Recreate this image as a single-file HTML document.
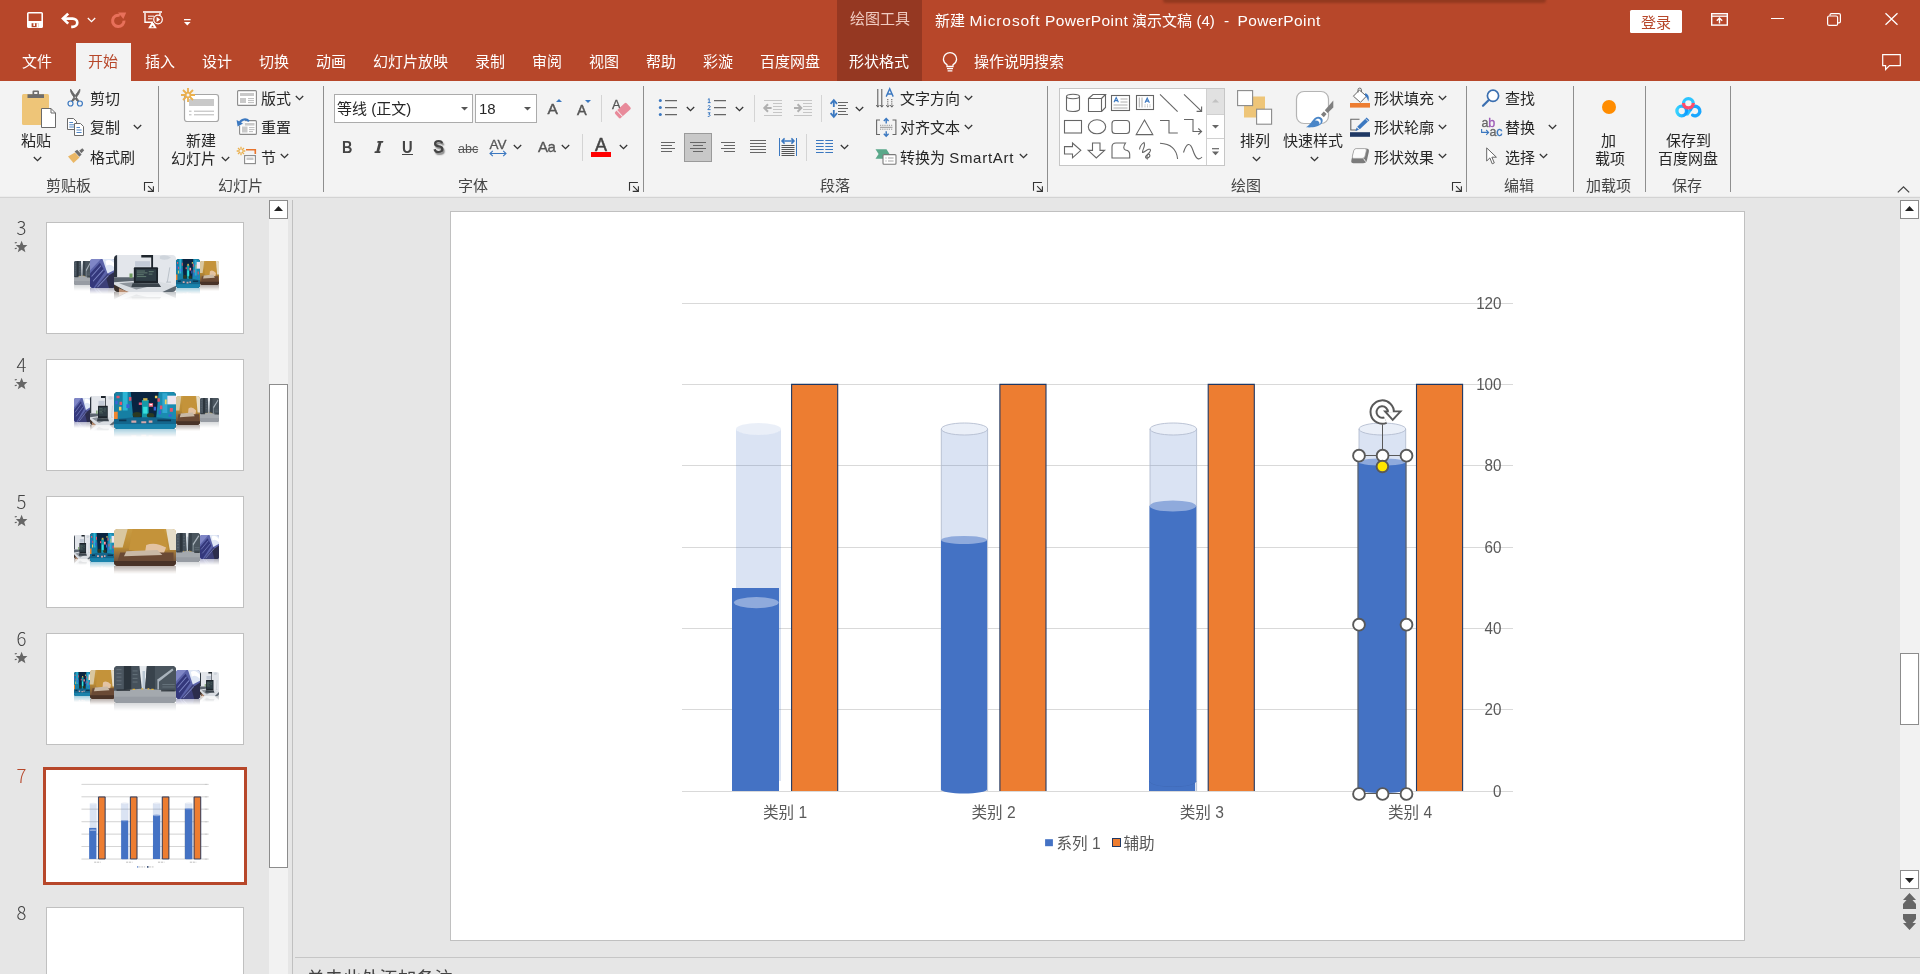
<!DOCTYPE html>
<html lang="zh-CN">
<head>
<meta charset="utf-8">
<title>PowerPoint</title>
<style>
*{box-sizing:border-box;margin:0;padding:0}
html,body{width:1920px;height:974px;overflow:hidden;background:#e6e6e6}
body{position:relative;-webkit-font-smoothing:antialiased;font-family:"Liberation Sans","Noto Sans CJK SC",sans-serif;font-size:15px;color:#262626}
#wrap{position:absolute;left:0;top:0;width:1920px;height:974px;will-change:transform}
.abs,.t,.ic,.sep,.ssep,.lbl,.dd{position:absolute}
.t{white-space:nowrap;line-height:20px;height:20px;margin-top:1px}
#titlebar{position:absolute;left:0;top:0;width:1920px;height:81px;background:#b7472a}
#titlebar .t{color:#fff}
#ribbon{position:absolute;left:0;top:81px;width:1920px;height:116px;background:#f3f3f3}
#ribbonline{position:absolute;left:0;top:196px;width:1920px;height:2px;background:linear-gradient(#ececec 0,#ececec 50%,#d3d3d3 50%,#d3d3d3 100%)}
.sep{width:1px;background:#8e8e8e;top:86px;height:106px}
.ssep{width:1px;background:#d4d4d4}
.lbl{color:#444;top:175px}
svg{position:absolute;overflow:visible}
.dd{width:9px;height:6px}
</style>
</head>
<body>
<div id="wrap">
<svg width="0" height="0" style="position:absolute">
<defs>
<symbol id="chev" viewBox="0 0 9 6" overflow="visible"><path d="M0.8 1 L4.5 4.6 L8.2 1" fill="none" stroke="currentColor" stroke-width="1.3"/></symbol>
<symbol id="launch" viewBox="0 0 10 10" overflow="visible"><path d="M0.5 8.700 V0.500 H8.900 M4.200 4.200 L9.300 9.300 M9.400 4.200 V9.400 H3.700" fill="none" stroke="#333" stroke-width="1.100"/></symbol>
</defs>
</svg>
<div id="titlebar">
 <div class="abs" style="left:1163px;top:-2px;width:383px;height:5px;background:#93391f;border-radius:0 0 3px 3px;filter:blur(1.3px)"></div>
 <div class="abs" style="left:837px;top:0;width:85px;height:81px;background:#953822"></div>
 <div class="abs" style="left:76px;top:43px;width:55px;height:38px;background:#f3f3f3"></div>
 <!-- quick access -->
 <svg style="left:27px;top:12px" width="16" height="16" viewBox="0 0 16 16"><rect x="0.8" y="0.8" width="14.4" height="14.4" rx="0.8" fill="none" stroke="#fff" stroke-width="1.6"/><rect x="1" y="9" width="14" height="6.4" fill="#fff"/><rect x="4.6" y="11.2" width="6.8" height="4" fill="#b7472a"/><rect x="6.4" y="11.2" width="1.6" height="2.8" fill="#fff"/><rect x="9.6" y="11.2" width="1.8" height="4" fill="#fff"/></svg>
 <svg style="left:61px;top:13px" width="18" height="15" viewBox="0 0 18 15"><path d="M2 5.6 H11.6 a4.7 4.1 0 0 1 0 8.2 H10.2" fill="none" stroke="#fff" stroke-width="2.7"/><path d="M7.2 0.6 L2 5.6 L7.2 10.6" fill="none" stroke="#fff" stroke-width="2.7"/></svg>
 <svg class="dd" style="left:87px;top:17px;color:#fff" viewBox="0 0 9 6"><use href="#chev"/></svg>
 <svg style="left:110px;top:12px" width="17" height="16" viewBox="0 0 17 16"><path d="M9.8 3.4 A5.7 5.7 0 1 0 14 8.6" fill="none" stroke="#e8705a" stroke-width="3"/><path d="M8 0.4 H16.2 L13.4 7 Z" fill="#e8705a"/></svg>
 <svg style="left:143px;top:11px" width="20" height="18" viewBox="0 0 20 18"><path d="M0 1 H19" stroke="#fff" stroke-width="1.6"/><path d="M2 2 V11.2 H10" fill="none" stroke="#fff" stroke-width="1.4"/><path d="M17 2 V4" stroke="#fff" stroke-width="1.4"/><path d="M5 5.2 H11 M5 7.8 H9.5" stroke="#fff" stroke-width="1"/><circle cx="15" cy="8.5" r="4.3" fill="none" stroke="#fff" stroke-width="1.2"/><path d="M13.6 6 L17.2 8.5 L13.6 11 Z" fill="#fff"/><path d="M8.3 12 L5.2 17.3 H13.8 L10.7 12 Z M9.5 14.5 L8 16.2 H11 Z" fill="#fff" fill-rule="evenodd"/></svg>
 <svg style="left:184px;top:19px" width="7" height="7" viewBox="0 0 7 7"><rect x="0" y="0" width="6.6" height="1.3" fill="#fff"/><path d="M0 3 H6.6 L3.3 6.4 Z" fill="#fff"/></svg>
 <!-- title -->
 <div class="t" style="left:850px;top:8px;color:#f0cbc1;font-size:15px">绘图工具</div>
 <div class="t" style="left:935px;top:10px;font-size:15px">新建</div>
 <div class="t" style="left:969.5px;top:10px;font-size:15.5px;letter-spacing:.9px">Microsoft</div>
 <div class="t" style="left:1045px;top:10px;font-size:15.5px;letter-spacing:.38px">PowerPoint</div>
 <div class="t" style="left:1132px;top:10px;font-size:15px">演示文稿</div>
 <div class="t" style="left:1196.5px;top:10px;font-size:15px">(4)</div>
 <div class="t" style="left:1224px;top:10px;font-size:15.5px">-</div>
 <div class="t" style="left:1237.5px;top:10px;font-size:15.5px;letter-spacing:.38px">PowerPoint</div>
 <div class="abs" style="left:1630px;top:10px;width:52px;height:23px;background:#fff;border-radius:1.5px"></div>
 <div class="t" style="left:1641px;top:12px;color:#b7472a !important;font-size:15px"><span style="color:#b7472a">登录</span></div>
 <svg style="left:1711px;top:13px" width="17" height="13" viewBox="0 0 17 13"><rect x="0.700" y="0.700" width="15.600" height="11.400" fill="none" stroke="#fff" stroke-width="1.400"/><path d="M0.700 3.200 H16.300" stroke="#fff" stroke-width="1.300"/><path d="M8.500 10.600 V5.200 M5.800 7.800 L8.500 5.100 L11.200 7.800" fill="none" stroke="#fff" stroke-width="1.400"/></svg>
 <div class="abs" style="left:1771px;top:17.600px;width:13px;height:1.400px;background:#fff"></div>
 <svg style="left:1827px;top:13px" width="14" height="13" viewBox="0 0 14 13"><rect x="0.6" y="3" width="10" height="9.4" rx="1.5" fill="none" stroke="#fff" stroke-width="1.2"/><path d="M3 2.8 V2 a1.4 1.4 0 0 1 1.4 -1.4 H12 a1.4 1.4 0 0 1 1.4 1.4 V8.5 a1.4 1.4 0 0 1 -1.4 1.4 H11" fill="none" stroke="#fff" stroke-width="1.2"/></svg>
 <svg style="left:1885px;top:13px" width="13" height="12" viewBox="0 0 13 12"><path d="M0.5 0.3 L12.5 11.7 M12.5 0.3 L0.5 11.7" stroke="#fff" stroke-width="1.3"/></svg>
 <!-- tabs -->
 <div class="t" style="left:22px;top:51px">文件</div>
 <div class="t" style="left:88px;top:51px"><span style="color:#b7472a">开始</span></div>
 <div class="t" style="left:145px;top:51px">插入</div>
 <div class="t" style="left:202px;top:51px">设计</div>
 <div class="t" style="left:259px;top:51px">切换</div>
 <div class="t" style="left:316px;top:51px">动画</div>
 <div class="t" style="left:373px;top:51px">幻灯片放映</div>
 <div class="t" style="left:475px;top:51px">录制</div>
 <div class="t" style="left:532px;top:51px">审阅</div>
 <div class="t" style="left:589px;top:51px">视图</div>
 <div class="t" style="left:646px;top:51px">帮助</div>
 <div class="t" style="left:703px;top:51px">彩漩</div>
 <div class="t" style="left:760px;top:51px">百度网盘</div>
 <div class="t" style="left:849px;top:51px">形状格式</div>
 <svg style="left:942px;top:52px" width="16" height="21" viewBox="0 0 16 21"><path d="M5 14.5 V12.8 C3 11.3 1.4 9.6 1.4 7.2 a6.6 6.6 0 0 1 13.2 0 C14.6 9.6 13 11.3 11 12.8 V14.5 Z" fill="none" stroke="#fff" stroke-width="1.3"/><path d="M5 16.6 H11 M5.6 18.8 H10.4" stroke="#fff" stroke-width="1.3"/></svg>
 <div class="t" style="left:974px;top:51px">操作说明搜索</div>
 <svg style="left:1882px;top:54px" width="19" height="17" viewBox="0 0 19 17"><path d="M0.7 0.7 H18.3 V11.6 H7.5 L3.6 15.5 V11.6 H0.7 Z" fill="none" stroke="#fff" stroke-width="1.2"/></svg>
</div>

<div id="ribbon"></div>
<div id="ribbonline"></div>
<div id="rb">
<!-- separators -->
<div class="sep" style="left:158px"></div>
<div class="sep" style="left:323px"></div>
<div class="sep" style="left:643px"></div>
<div class="sep" style="left:1047px"></div>
<div class="sep" style="left:1466px"></div>
<div class="sep" style="left:1573px"></div>
<div class="sep" style="left:1645px"></div>
<div class="sep" style="left:1730px"></div>
<!-- group labels -->
<div class="t lbl" style="left:46px">剪贴板</div>
<div class="t lbl" style="left:218px">幻灯片</div>
<div class="t lbl" style="left:458px">字体</div>
<div class="t lbl" style="left:820px">段落</div>
<div class="t lbl" style="left:1231px">绘图</div>
<div class="t lbl" style="left:1504px">编辑</div>
<div class="t lbl" style="left:1586px">加载项</div>
<div class="t lbl" style="left:1672px">保存</div>
<svg style="left:144px;top:182px" width="10" height="10"><use href="#launch"/></svg>
<svg style="left:629px;top:182px" width="10" height="10"><use href="#launch"/></svg>
<svg style="left:1033px;top:182px" width="10" height="10"><use href="#launch"/></svg>
<svg style="left:1452px;top:182px" width="10" height="10"><use href="#launch"/></svg>
<svg style="left:1897px;top:186px" width="13" height="7" viewBox="0 0 13 7"><path d="M0.8 6.4 L6.5 0.9 L12.2 6.4" fill="none" stroke="#444" stroke-width="1.3"/></svg>
<!--CLIP-->
<!-- clipboard group -->
<svg style="left:22px;top:90px" width="34" height="38" viewBox="0 0 34 38">
 <rect x="0" y="4" width="27" height="31" rx="1.5" fill="#eec578"/>
 <path d="M5.5 8 V4.2 H10.5 V1.6 a1.2 1.2 0 0 1 1.2 -1.2 H15.8 a1.2 1.2 0 0 1 1.2 1.2 V4.2 H22 V8 Z" fill="#6d6d6d"/>
 <rect x="12.2" y="2" width="3.2" height="2" fill="#f3f3f3"/>
 <path d="M19.5 18.5 H29 L33.5 23 V37.5 H19.5 Z" fill="#fff" stroke="#6a6a6a" stroke-width="1"/>
 <path d="M29 18.5 V23 H33.5" fill="none" stroke="#6a6a6a" stroke-width="1"/>
</svg>
<div class="t" style="left:21px;top:130px">粘贴</div>
<svg class="dd" style="left:33px;top:156px;color:#333" viewBox="0 0 9 6"><use href="#chev"/></svg>
<svg style="left:67px;top:89px" width="17" height="18" viewBox="0 0 17 18">
 <path d="M3.6 0.2 C3.2 3 4.6 5.6 10.6 12.6 L11.8 11.8 C9.6 8.4 6.4 4.4 3.6 0.2 Z M12.8 0.2 C13.2 3 11.8 5.6 5.8 12.6 L4.6 11.8 C6.8 8.4 10 4.4 12.8 0.2 Z" fill="#666" stroke="#666" stroke-width="0.9"/>
 <circle cx="3.5" cy="14.5" r="2.5" fill="none" stroke="#3b78c0" stroke-width="1.2"/>
 <circle cx="12.9" cy="14.5" r="2.5" fill="none" stroke="#3b78c0" stroke-width="1.2"/>
</svg>
<div class="t" style="left:90px;top:88px">剪切</div>
<svg style="left:67px;top:118px" width="18" height="18" viewBox="0 0 18 18">
 <path d="M0.5 0.5 H6.5 L9.5 3.5 V11.5 H0.5 Z" fill="#fff" stroke="#6a6a6a"/>
 <path d="M2.3 4.5 H6 M2.3 6.8 H7.5 M2.3 9 H7.5" stroke="#3b78c0" stroke-width="0.9"/>
 <path d="M7.5 5.5 H13.5 L16.5 8.5 V17.5 H7.5 Z" fill="#fff" stroke="#6a6a6a"/>
 <path d="M9.5 9.5 H13 M9.5 12 H14.6 M9.5 14.5 H14.6" stroke="#3b78c0" stroke-width="0.9"/>
</svg>
<div class="t" style="left:90px;top:117px">复制</div>
<svg class="dd" style="left:133px;top:124px;color:#333" viewBox="0 0 9 6"><use href="#chev"/></svg>
<svg style="left:67px;top:148px" width="18" height="16" viewBox="0 0 18 16">
 <path d="M1 8.5 L8 4.5 L12.5 9.5 L6.5 15 Z" fill="#eab766"/>
 <path d="M7.6 3.6 L10.2 1.8 L14.6 6.6 L12.4 8.8 Z" fill="#6d6d6d"/>
 <path d="M12.2 2.8 L15.3 0.2 L17.2 2.2 L14.4 5.2 Z" fill="#6d6d6d"/>
</svg>
<div class="t" style="left:90px;top:147px">格式刷</div>

<!--SLIDES-->
<!-- slides group -->
<svg style="left:181px;top:88px" width="39" height="35" viewBox="0 0 39 35">
 <rect x="3.5" y="6.5" width="34" height="27" rx="2.5" fill="#fff" stroke="#a6a6a6" stroke-width="1.2"/>
 <rect x="8" y="11" width="25" height="7" fill="#c9c9c9"/>
 <path d="M8 23.2 H10.5 M13 23.2 H33 M8 26.8 H10.5 M13 26.8 H33" stroke="#b5b5b5" stroke-width="1"/>
 <g stroke="#eab04e" stroke-width="1.800" fill="none"><path d="M7 0 V4.3 M7 9.7 V14 M0 7 H4.3 M9.7 7 H14 M2 2 L5 5 M9 9 L12 12 M12 2 L9 5 M5 9 L2 12"/><circle cx="7" cy="7" r="2.4" fill="#f3f3f3"/></g>
</svg>
<div class="t" style="left:186px;top:130px">新建</div>
<div class="t" style="left:171px;top:148px">幻灯片</div>
<svg class="dd" style="left:220.5px;top:156px;color:#333" viewBox="0 0 9 6"><use href="#chev"/></svg>
<svg style="left:237px;top:90px" width="20" height="16" viewBox="0 0 20 16">
 <rect x="0.6" y="0.6" width="18.8" height="14.8" rx="1" fill="#fff" stroke="#8a8a8a" stroke-width="1.1"/>
 <rect x="3" y="3" width="14" height="3" fill="#c9c9c9"/><rect x="3" y="8" width="6" height="5" fill="#c9c9c9"/>
 <path d="M11 8.6 H17 M11 10.6 H17 M11 12.6 H17" stroke="#b5b5b5" stroke-width="0.9"/>
</svg>
<div class="t" style="left:261px;top:88px">版式</div>
<svg class="dd" style="left:295px;top:95px;color:#333" viewBox="0 0 9 6"><use href="#chev"/></svg>
<svg style="left:237px;top:117px" width="20" height="18" viewBox="0 0 20 18">
 <rect x="2.600" y="3.600" width="16.800" height="13.800" rx="1" fill="#fff" stroke="#8a8a8a" stroke-width="1.100"/>
 <rect x="8" y="6" width="9.500" height="2.600" fill="#c9c9c9"/><rect x="5" y="9.500" width="5.500" height="6" fill="#c9c9c9"/>
 <path d="M12 10.600 H17.500 M12 12.600 H17.500 M12 14.600 H16" stroke="#b5b5b5" stroke-width="0.900"/>
 <path d="M-1 0 H8 V8.600 H-1 Z" fill="#f3f3f3"/>
 <path d="M2.400 7 C3 2.800 8.500 0.800 12 4.200" fill="none" stroke="#3b78c0" stroke-width="2.200"/>
 <path d="M-0.400 3 L6 6.400 L0.600 9.600 Z" fill="#3b78c0"/>
</svg>
<div class="t" style="left:261px;top:117px">重置</div>
<svg style="left:237px;top:147px" width="20" height="18" viewBox="0 0 20 18">
 <g stroke="#eab04e" stroke-width="1.3" fill="none"><path d="M4 -0.3 V2.6 M4 5.4 V8.3 M-0.3 4 H2.6 M5.4 4 H8.3 M1 1 L3 3 M5 5 L7 7 M7 1 L5 3 M3 5 L1 7"/></g>
 <path d="M9 2.800 H18.300 V7" fill="none" stroke="#e8742c" stroke-width="1.600"/>
 <rect x="7.6" y="8.6" width="10.8" height="8" fill="#fff" stroke="#8a8a8a" stroke-width="1.1"/>
 <rect x="9.5" y="10.5" width="7" height="2.5" fill="#c9c9c9"/>
</svg>
<div class="t" style="left:261px;top:147px">节</div>
<svg class="dd" style="left:280px;top:153px;color:#333" viewBox="0 0 9 6"><use href="#chev"/></svg>

<!-- font group -->
<div class="abs" style="left:334px;top:94px;width:139px;height:29px;background:#fff;border:1px solid #ababab"></div>
<div class="abs" style="left:475px;top:94px;width:62px;height:29px;background:#fff;border:1px solid #ababab"></div>
<div class="t" style="left:337px;top:98px">等线 (正文)</div>
<div class="t" style="left:479px;top:98px">18</div>
<svg style="left:461px;top:107px" width="7" height="4" viewBox="0 0 7 4"><path d="M0 0 H7 L3.5 3.6 Z" fill="#555"/></svg>
<svg style="left:524px;top:107px" width="7" height="4" viewBox="0 0 7 4"><path d="M0 0 H7 L3.5 3.6 Z" fill="#555"/></svg>
<div class="t" style="left:547.5px;top:98px;font-size:15.5px;color:#555;-webkit-text-stroke:.45px #555">A</div>
<svg style="left:556px;top:99px" width="6" height="3" viewBox="0 0 6 3"><path d="M0 3 H6 L3 0 Z" fill="#3b78c0"/></svg>
<div class="t" style="left:577px;top:99px;font-size:14.5px;color:#555;-webkit-text-stroke:.45px #555">A</div>
<svg style="left:585px;top:100px" width="6" height="3" viewBox="0 0 6 3"><path d="M0 0 H6 L3 3 Z" fill="#3b78c0"/></svg>
<div class="ssep" style="left:601px;top:95px;height:27px"></div>
<div class="t" style="left:612px;top:94px;font-size:13px;color:#555;-webkit-text-stroke:.3px #555">A</div>
<svg style="left:614px;top:102px" width="17" height="17" viewBox="0 0 17 17"><g transform="rotate(-42 8.8 8.6)"><rect x="1" y="4.4" width="15.6" height="8.4" rx="1.6" fill="#e88a9a"/><path d="M4.6 4.4 V12.8" stroke="#f3f3f3" stroke-width="1"/></g></svg>
<div class="t" style="left:342px;top:137px;font-size:16.7px;font-weight:bold;color:#444;transform:scaleX(.86);transform-origin:left">B</div>
<svg style="left:374px;top:141px" width="10" height="12" viewBox="0 0 10 12"><path d="M3.6 0 H9.4 L9 1.7 H7.4 L5.2 10.3 H6.6 L6.2 12 H0.4 L0.8 10.3 H2.4 L4.6 1.7 H3.2 Z" fill="#444"/></svg>
<div class="t" style="left:402px;top:137px;font-size:16.7px;color:#444;font-weight:bold;transform:scaleX(.88);transform-origin:left">U</div>
<div class="abs" style="left:402px;top:154px;width:11px;height:1.3px;background:#444"></div>
<div class="t" style="left:433px;top:136px;font-size:18.5px;font-weight:bold;transform:scaleX(.9);transform-origin:left;color:#444;text-shadow:1.5px 1.5px 1.5px rgba(0,0,0,.45)">S</div>
<div class="t" style="left:458px;top:138px;font-size:12.5px;color:#555;text-decoration:line-through">abc</div>
<div class="t" style="left:489.5px;top:134px;font-size:13.5px;color:#555;letter-spacing:0px;-webkit-text-stroke:.3px #555">AV</div>
<svg style="left:489px;top:150px" width="18" height="7" viewBox="0 0 18 7"><path d="M1 3.5 H17 M3.8 0.8 L1 3.5 L3.8 6.2 M14.2 0.8 L17 3.5 L14.2 6.2" fill="none" stroke="#3b78c0" stroke-width="1.1"/></svg>
<svg class="dd" style="left:513px;top:144px;color:#333" viewBox="0 0 9 6"><use href="#chev"/></svg>
<div class="t" style="left:538px;top:136px;font-size:15px;color:#555;letter-spacing:-.6px;-webkit-text-stroke:.35px #555">Aa</div>
<svg class="dd" style="left:561px;top:144px;color:#333" viewBox="0 0 9 6"><use href="#chev"/></svg>
<div class="ssep" style="left:582px;top:134px;height:27px"></div>
<div class="t" style="left:595px;top:134px;font-size:18px;color:#444;-webkit-text-stroke:.5px #444">A</div>
<div class="abs" style="left:591px;top:152px;width:20px;height:5px;background:#f00"></div>
<svg class="dd" style="left:619px;top:144px;color:#333" viewBox="0 0 9 6"><use href="#chev"/></svg>

<!-- paragraph group -->
<svg style="left:658px;top:98px" width="20" height="19" viewBox="0 0 20 19">
 <g fill="#3b78c0"><circle cx="2.3" cy="2.6" r="1.5"/><circle cx="2.3" cy="9.6" r="1.5"/><circle cx="2.3" cy="16.6" r="1.5"/></g>
 <path d="M7 2.6 H19 M7 9.6 H19 M7 16.6 H19" stroke="#666" stroke-width="1.1"/>
</svg>
<svg class="dd" style="left:686px;top:106px;color:#333" viewBox="0 0 9 6"><use href="#chev"/></svg>
<svg style="left:707px;top:98px" width="20" height="19" viewBox="0 0 20 19">
 <path d="M7 2.6 H19 M7 9.6 H19 M7 16.6 H19" stroke="#666" stroke-width="1.1"/>
 <g fill="none" stroke="#3b78c0" stroke-width="1"><path d="M0.8 1.6 L2.2 0.6 V4.6 M0.8 4.6 H3.6"/><path d="M0.8 8.2 C1.6 7.2 3.4 7.4 3.2 8.8 C3 9.8 1.2 10.4 0.8 11.6 H3.6"/><path d="M0.8 14.8 H3.2 L1.8 16.3 C3.6 16.3 3.8 18.6 0.8 18.5"/></g>
</svg>
<svg class="dd" style="left:735px;top:106px;color:#333" viewBox="0 0 9 6"><use href="#chev"/></svg>
<div class="ssep" style="left:754px;top:95px;height:27px"></div>
<svg style="left:763px;top:100px" width="19" height="16" viewBox="0 0 19 16">
 <path d="M1 0.5 H19 M10 3.5 H19 M10 6.5 H19 M10 9.500 H19 M10 12.5 H19 M1 15.5 H19" stroke="#c6c6c6" stroke-width="1"/>
 <path d="M8.6 8 H2.4" stroke="#b0b0b0" stroke-width="2"/><path d="M5 4.300 L1.300 8 L5 11.700" fill="none" stroke="#b0b0b0" stroke-width="2"/>
</svg>
<svg style="left:793px;top:100px" width="19" height="16" viewBox="0 0 19 16">
 <path d="M1 0.5 H19 M10 3.5 H19 M10 6.5 H19 M10 9.500 H19 M10 12.5 H19 M1 15.5 H19" stroke="#c6c6c6" stroke-width="1"/>
 <path d="M1 8 H7.200" stroke="#b0b0b0" stroke-width="2"/><path d="M4.600 4.300 L8.300 8 L4.600 11.700" fill="none" stroke="#b0b0b0" stroke-width="2"/>
</svg>
<div class="ssep" style="left:821px;top:95px;height:27px"></div>
<svg style="left:830px;top:99px" width="19" height="19" viewBox="0 0 19 19">
 <path d="M3.800 2 V8 M3.800 11 V17" stroke="#3b78c0" stroke-width="1.800"/><path d="M0.600 4.800 L3.800 1.200 L7 4.800 M0.600 14.200 L3.800 17.800 L7 14.200" fill="none" stroke="#3b78c0" stroke-width="1.800"/>
 <path d="M8 3.500 H18 M8 6.500 H16 M8 9.500 H18 M8 12.500 H16 M8 15.500 H18" stroke="#666" stroke-width="1"/>
</svg>
<svg class="dd" style="left:855px;top:106px;color:#333" viewBox="0 0 9 6"><use href="#chev"/></svg>
<!-- row 2 -->
<svg style="left:661px;top:141px" width="15" height="12" viewBox="0 0 15 12"><path d="M0 1.500 H14 M0 4.500 H11 M0 7.500 H14 M0 10.500 H11" stroke="#666" stroke-width="1"/></svg>
<div class="abs" style="left:684px;top:133px;width:28px;height:29px;background:#c8c8c8;border:1px solid #9a9a9a"></div>
<svg style="left:690px;top:141px" width="17" height="12" viewBox="0 0 17 12"><path d="M0 1.500 H16 M3 4.500 H13 M0 7.500 H16 M3 10.500 H13" stroke="#666" stroke-width="1"/></svg>
<svg style="left:721px;top:141px" width="15" height="12" viewBox="0 0 15 12"><path d="M0 1.500 H14 M3 4.500 H14 M0 7.500 H14 M3 10.500 H14" stroke="#666" stroke-width="1"/></svg>
<svg style="left:750px;top:140px" width="16" height="13" viewBox="0 0 16 13"><path d="M0 0.500 H16 M0 3.500 H16 M0 6.500 H16 M0 9.500 H16 M0 12.500 H16" stroke="#666" stroke-width="1"/></svg>
<svg style="left:779px;top:138px" width="18" height="18" viewBox="0 0 18 18">
 <path d="M0.500 0 V18 M17.500 0 V18" stroke="#3b78c0" stroke-width="1"/>
 <path d="M3 3 H15 M5.600 0.400 L3 3 L5.600 5.600 M12.400 0.400 L15 3 L12.400 5.600" fill="none" stroke="#3b78c0" stroke-width="1.500"/>
 <path d="M2.500 7.500 H15.500 M2.500 9.500 H15.500 M2.500 11.500 H15.500 M2.500 13.500 H15.500 M2.500 15.500 H15.500 M2.500 17.500 H15.500" stroke="#555" stroke-width="1"/>
</svg>
<div class="ssep" style="left:806px;top:134px;height:27px"></div>
<svg style="left:816px;top:140px" width="18" height="13" viewBox="0 0 18 13"><path d="M0 0.500 H7.700 M0 3.500 H7.700 M0 6.500 H7.700 M0 9.500 H7.700 M0 12.500 H7.700 M9.300 0.500 H17 M9.300 3.500 H17 M9.300 6.500 H17 M9.300 9.500 H17 M9.300 12.500 H17" stroke="#3b78c0" stroke-width="1.100"/></svg>
<svg class="dd" style="left:840px;top:144px;color:#333" viewBox="0 0 9 6"><use href="#chev"/></svg>
<!-- text direction etc -->
<svg style="left:876px;top:88px" width="21" height="20" viewBox="0 0 21 20">
 <path d="M1.8 1 V19 M5.8 1 V19" stroke="#555" stroke-width="1"/><path d="M0.3 17 L1.8 19.2 L3.3 17 M4.3 17 L5.8 19.2 L7.3 17" fill="none" stroke="#555" stroke-width="0.9"/>
 <path d="M10.2 8.6 L13.7 0.8 L17.2 8.6 M11.5 6 H15.9" fill="none" stroke="#3b78c0" stroke-width="1.4"/>
 <path d="M11.8 11 V19 M15.8 11 V19" stroke="#555" stroke-width="1" stroke-dasharray="1.2 1"/><path d="M10.3 17 L11.8 19.2 L13.3 17 M14.3 17 L15.8 19.2 L17.3 17" fill="none" stroke="#555" stroke-width="0.9"/>
</svg>
<div class="t" style="left:900px;top:88px">文字方向</div>
<svg class="dd" style="left:964px;top:95px;color:#333" viewBox="0 0 9 6"><use href="#chev"/></svg>
<svg style="left:876px;top:118px" width="21" height="19" viewBox="0 0 21 19">
 <path d="M4 2 H0.6 V16.5 H4 M16.5 2 H19.9 V16.5 H16.5" fill="none" stroke="#666" stroke-width="1.1"/>
 <path d="M4 7.3 H16.5 M4 11.2 H16.5" stroke="#888" stroke-width="0.9" stroke-dasharray="1.2 1"/><path d="M4 9.3 H16.5" stroke="#888" stroke-width="0.9"/>
 <path d="M10.2 0.6 V5.6 M7.8 3 L10.2 0.6 L12.6 3 M10.2 18.2 V13.2 M7.8 15.8 L10.2 18.2 L12.6 15.8" fill="none" stroke="#3b78c0" stroke-width="1.4"/>
</svg>
<div class="t" style="left:900px;top:117px">对齐文本</div>
<svg class="dd" style="left:964px;top:124px;color:#333" viewBox="0 0 9 6"><use href="#chev"/></svg>
<svg style="left:875px;top:149px" width="22" height="16" viewBox="0 0 22 16">
 <path d="M0.5 0.3 H11.5 L14.5 5 L11.5 9.8 H0.5 L3.6 5 Z" fill="#5aa88a"/>
 <rect x="8" y="5.6" width="13" height="9.6" rx="1" fill="#fff" stroke="#7a7a7a" stroke-width="1.1"/>
 <path d="M10.4 9 H11.6 M13 9 H18.6 M10.4 12 H11.6 M13 12 H18.6" stroke="#999" stroke-width="0.9"/>
</svg>
<div class="t" style="left:900px;top:147px">转换为 <span style="letter-spacing:.72px">SmartArt</span></div>
<svg class="dd" style="left:1019px;top:153px;color:#333" viewBox="0 0 9 6"><use href="#chev"/></svg>

<!-- drawing group -->
<div class="abs" style="left:1059px;top:88px;width:166px;height:78px;background:#fff;border:1px solid #c6c6c6"></div>
<div class="abs" style="left:1206px;top:89px;width:18px;height:26px;background:#e1e1e1;border-left:1px solid #d0d0d0;border-bottom:1px solid #d0d0d0"></div>
<div class="abs" style="left:1206px;top:115px;width:18px;height:24px;border-left:1px solid #d0d0d0;border-bottom:1px solid #d0d0d0"></div>
<div class="abs" style="left:1206px;top:139px;width:18px;height:26px;border-left:1px solid #d0d0d0"></div>
<svg style="left:1212px;top:99px" width="7" height="4" viewBox="0 0 7 4"><path d="M0 3.6 H7 L3.5 0 Z" fill="#c2c2c2"/></svg>
<svg style="left:1212px;top:125px" width="7" height="4" viewBox="0 0 7 4"><path d="M0 0 H7 L3.5 3.6 Z" fill="#666"/></svg>
<svg style="left:1212px;top:148px" width="7" height="8" viewBox="0 0 7 8"><path d="M0 0.7 H7" stroke="#666" stroke-width="1.2"/><path d="M0 3.6 H7 L3.5 7.2 Z" fill="#666"/></svg>
<svg style="left:1060px;top:89px" width="147" height="77" viewBox="1060 89 147 77" fill="none" stroke="#666" stroke-width="1.1">
 <!-- row1 -->
 <path d="M1066.5 96.5 V109.3 a6.5 2.2 0 0 0 13 0 V96.5"/><ellipse cx="1073" cy="96.5" rx="6.5" ry="2.2"/>
 <path d="M1088.5 98.5 H1101.5 V111.5 H1088.5 Z M1088.5 98.5 L1093 94.5 H1105.5 L1101.5 98.5 M1105.5 94.5 V107.5 L1101.5 111.5"/>
 <rect x="1111.5" y="95.5" width="18" height="15"/>
 <path d="M1114 102.3 L1116.2 97.5 L1118.4 102.3 M1114.8 100.6 H1117.6" stroke="#3b78c0" stroke-width="1.1"/>
 <path d="M1120.5 99 H1127.5 M1120.5 102 H1127.5 M1113.5 105 H1127.5 M1113.5 108 H1127.5" stroke="#999" stroke-width="0.8"/>
 <rect x="1136.5" y="95.5" width="17" height="14"/>
 <path d="M1145 102.8 L1147.2 98 L1149.4 102.8 M1145.8 101.1 H1148.6" stroke="#3b78c0" stroke-width="1.1"/>
 <path d="M1139.3 97.5 V107.5 M1142 97.5 V107.5" stroke="#999" stroke-width="0.8"/><path d="M1145 104.5 V107.5 M1147.5 104.5 V107.5 M1150 104.5 V107.5" stroke="#999" stroke-width="0.8" stroke-dasharray="1 0.8"/>
 <path d="M1160 94.3 L1177.6 111.6"/>
 <path d="M1184 94.3 L1201.4 111.2 M1196.6 111.4 H1201.6 V106.4"/>
 <!-- row2 -->
 <rect x="1064.5" y="120.5" width="17" height="12.5"/>
 <ellipse cx="1097" cy="126.8" rx="8.7" ry="7"/>
 <rect x="1112" y="120.5" width="17.5" height="13" rx="3"/>
 <path d="M1144.5 120 L1152.8 134.6 H1136.2 Z"/>
 <path d="M1160 120.5 H1169 V133 H1177.8"/>
 <path d="M1184 119.5 H1193 V131.5 H1201.5 M1198.3 128.5 L1201.6 131.5 L1198.3 134.5"/>
 <!-- row3 -->
 <path d="M1064.5 146.6 H1072.5 V143 L1080.8 150.3 L1072.5 157.8 V154 H1064.5 Z"/>
 <path d="M1092.5 143 H1100 V150.4 H1104.6 L1096.3 158 L1088.2 150.4 H1092.5 Z"/>
 <path d="M1112 158 V147 Q1112 143 1116 143 H1125.5 Q1122 148.5 1125.5 150 Q1129.7 150.6 1129.7 154.5 V158 Z"/>
 <path d="M1139.5 149.5 C1140 145 1142.5 143.5 1144 142.5 C1146 146 1142 150 1142.5 152.5 C1144 153 1150 146.5 1150.5 150.5 C1150 154 1144.5 155 1145.5 157.5 C1147 159.5 1151 156.5 1149.5 154.5 C1147.5 153 1146 157 1147.5 159.5"/>
 <path d="M1160 143.3 Q1176 144 1177.6 159"/>
 <path d="M1183.5 152.5 C1186.5 143 1190 141.5 1193 150.5 C1196 159.5 1199 160.5 1202 157"/>
</svg>
<!-- arrange -->
<svg style="left:1237px;top:90px" width="36" height="36" viewBox="0 0 36 36">
 <rect x="7" y="6.5" width="21" height="21" fill="#eec578"/>
 <rect x="0.6" y="0.6" width="15" height="15" fill="#fff" stroke="#8a8a8a" stroke-width="1.1"/>
 <rect x="19.6" y="19.2" width="15" height="15" fill="#fff" stroke="#8a8a8a" stroke-width="1.1"/>
</svg>
<div class="t" style="left:1240px;top:130px">排列</div>
<svg class="dd" style="left:1252px;top:156px;color:#333" viewBox="0 0 9 6"><use href="#chev"/></svg>
<!-- quick styles -->
<svg style="left:1295px;top:90px" width="40" height="40" viewBox="0 0 40 40">
 <rect x="1.500" y="1.500" width="32" height="32" rx="7.500" fill="#fff" stroke="#b4b4b4" stroke-width="1.200"/>
 <path d="M29.800 20.300 L38.300 10.600 V17.600 L32.600 23 Z" fill="#7f7f7f"/>
 <path d="M26 24.600 L28.800 21.400 L31.600 24 L28.800 27.200 Z" fill="#7f7f7f"/>
 <path d="M11 37.300 C16.500 34.500 17.500 27.600 23 26.800 C27.300 26.600 29 30.600 26.600 33.600 C23.600 37.200 16.500 37.800 11 37.300 Z" fill="#4a86c8"/>
 <path d="M20 30.600 C21.500 28.400 24.600 28.200 25.600 30.400 C26.200 32 25.400 33.400 24.400 34.400 C25 32.400 23.400 30.200 20 30.600 Z" fill="#fff"/>
</svg>
<div class="t" style="left:1283px;top:130px">快速样式</div>
<svg class="dd" style="left:1310px;top:156px;color:#333" viewBox="0 0 9 6"><use href="#chev"/></svg>
<!-- shape fill / outline / effects -->
<svg style="left:1350px;top:88px" width="21" height="20" viewBox="0 0 21 20">
 <rect x="0" y="15" width="20" height="4.600" fill="#ed7d31"/>
 <path d="M9.400 2 L16.400 8.200 L10.400 14.400 L3.400 8.200 Z" fill="#fff" stroke="#666" stroke-width="1"/>
 <path d="M8 4.500 V1.800 a1.700 1.700 0 0 1 3.400 0 V4" fill="none" stroke="#666" stroke-width="1"/>
 <path d="M15 5.200 C18.400 5.600 19.800 9.600 18.200 13.600 C17.600 11 16.800 9.200 15.200 8 Z" fill="#3b78c0"/>
</svg>
<div class="t" style="left:1374px;top:88px">形状填充</div>
<svg class="dd" style="left:1438px;top:95px;color:#333" viewBox="0 0 9 6"><use href="#chev"/></svg>
<svg style="left:1350px;top:117px" width="21" height="20" viewBox="0 0 21 20">
 <rect x="0" y="15.2" width="20" height="4.6" fill="#1f3864"/>
 <path d="M9.5 2.2 H0.8 V13 H7" fill="none" stroke="#666" stroke-width="1.1"/>
 <path d="M16.6 0.6 L19.4 3.2 L9.8 12.2 L7.2 9.8 Z" fill="#3b78c0"/><path d="M6.6 10.6 L9 12.8 L5.4 14 Z" fill="#3b78c0"/>
 <path d="M15.4 1.8 L18.2 4.4" stroke="#f3f3f3" stroke-width="0.8"/>
</svg>
<div class="t" style="left:1374px;top:117px">形状轮廓</div>
<svg class="dd" style="left:1438px;top:124px;color:#333" viewBox="0 0 9 6"><use href="#chev"/></svg>
<svg style="left:1350px;top:147px" width="21" height="18" viewBox="0 0 21 18">
 <path d="M6 1.600 H16 Q19.600 1.600 18.800 5 L17 13 Q16.300 16.200 13 16.200 H3.600 Q0.600 16.200 1.400 13 L3.400 4.600 Q4 1.600 6 1.600 Z" fill="#7b7b7b"/>
 <path d="M6.200 1.600 H14.600 Q16.800 1.600 16.300 3.800 L15 9.200 Q14.400 11.400 12.200 11.400 H3.800 Q1.800 11.400 2.400 9.200 L3.700 3.800 Q4.300 1.600 6.200 1.600 Z" fill="#fbfbfb" stroke="#9a9a9a" stroke-width="0.700"/>
 <path d="M13.600 11.600 L15.600 14.600" stroke="#f0f0f0" stroke-width="1"/>
</svg>
<div class="t" style="left:1374px;top:147px">形状效果</div>
<svg class="dd" style="left:1438px;top:153px;color:#333" viewBox="0 0 9 6"><use href="#chev"/></svg>

<!-- edit group -->
<svg style="left:1482px;top:89px" width="18" height="18" viewBox="0 0 18 18">
 <circle cx="11" cy="6.8" r="5.6" fill="#fff" stroke="#3b6fb0" stroke-width="1.7"/>
 <path d="M6.8 11 L1 16.8" stroke="#3b6fb0" stroke-width="2.2" stroke-linecap="round"/>
</svg>
<div class="t" style="left:1505px;top:88px">查找</div>
<div class="t" style="left:1481.500px;top:112px;font-size:12.500px;color:#666;letter-spacing:-0.200px;-webkit-text-stroke:.3px #666">a<span style="color:#9b59b6;-webkit-text-stroke:.3px #9b59b6">b</span></div>
<div class="t" style="left:1489.500px;top:121px;font-size:12.500px;color:#666;letter-spacing:-0.200px;-webkit-text-stroke:.3px #666">a<span style="color:#3b78c0;-webkit-text-stroke:.3px #3b78c0">c</span></div>
<svg style="left:1481px;top:129px" width="9" height="7" viewBox="0 0 9 7"><path d="M0.600 0 V3.400 H7.600 M5.200 1 L7.600 3.400 L5.200 5.800" fill="none" stroke="#3b78c0" stroke-width="1.100"/></svg>
<div class="t" style="left:1505px;top:117px">替换</div>
<svg class="dd" style="left:1548px;top:124px;color:#333" viewBox="0 0 9 6"><use href="#chev"/></svg>
<svg style="left:1486px;top:147px" width="12" height="18" viewBox="0 0 12 18">
 <path d="M0.7 0.9 V14 L3.9 10.9 L6.2 16.8 L8.3 15.9 L5.9 10.2 H10.4 Z" fill="#fff" stroke="#666" stroke-width="1"/>
</svg>
<div class="t" style="left:1505px;top:147px">选择</div>
<svg class="dd" style="left:1539px;top:153px;color:#333" viewBox="0 0 9 6"><use href="#chev"/></svg>
<!-- add-ins -->
<div class="abs" style="left:1602px;top:100px;width:14px;height:14px;border-radius:50%;background:#ff8c00;filter:blur(0.7px)"></div>
<div class="t" style="left:1601px;top:130px">加</div>
<div class="t" style="left:1595px;top:148px">载项</div>
<!-- baidu -->
<svg style="left:1675px;top:96px" width="27" height="22" viewBox="0 0 27 22">
 <defs><linearGradient id="bdg" x1="0" y1="0" x2="1" y2="0"><stop offset="0" stop-color="#35d2ff"/><stop offset="1" stop-color="#0f9cff"/></linearGradient></defs>
 <path d="M11.300 13.600 L8.600 19.600 L13.200 19.600 L17.600 13.400 Z" fill="#27bfff"/>
 <circle cx="6.700" cy="15" r="4.800" fill="none" stroke="url(#bdg)" stroke-width="3.300"/>
 <path d="M17.600 19.200 A4.800 4.800 0 1 0 15.600 13.200" fill="none" stroke="#18a6ff" stroke-width="3.300" stroke-linecap="round"/>
 <path d="M8.500 7.600 A4.900 4.900 0 0 1 18.300 7.600" fill="none" stroke="#2cc4ff" stroke-width="3.300"/>
 <path d="M8.500 7 A4.900 4.900 0 0 0 18.300 7" fill="none" stroke="#ff4b6a" stroke-width="3.300"/>
</svg>
<div class="t" style="left:1666px;top:130px">保存到</div>
<div class="t" style="left:1658px;top:148px">百度网盘</div>

</div>

<div id="left">
<svg width="0" height="0" style="position:absolute"><defs>
<linearGradient id="gst" x1="0" y1="0" x2="0" y2="1"><stop offset="0" stop-color="#27313b"/><stop offset=".5" stop-color="#5b6771"/><stop offset=".8" stop-color="#9aa1a5"/><stop offset="1" stop-color="#7c8387"/></linearGradient>
<linearGradient id="gne" x1="0" y1="0" x2="0" y2="1"><stop offset="0" stop-color="#082238"/><stop offset=".45" stop-color="#12607f"/><stop offset=".8" stop-color="#1b86a4"/><stop offset="1" stop-color="#1a7796"/></linearGradient>
<linearGradient id="gsw" x1="0" y1="0" x2="0" y2="1"><stop offset="0" stop-color="#c99b42"/><stop offset=".5" stop-color="#b98a34"/><stop offset=".75" stop-color="#86633f"/><stop offset="1" stop-color="#5b4130"/></linearGradient>
<symbol id="ph-street" viewBox="0 0 100 60" preserveAspectRatio="none"><rect width="100" height="60" fill="#3d4751"/><path d="M0 0 H16 V40 H0 Z" fill="#4b5660"/><path d="M16 0 H28 V40 H16 Z" fill="#2c353d"/><path d="M28 0 H40 L43 40 H28 Z" fill="#46515b"/><path d="M41 0 H53 L50 38 H45 Z" fill="#e6eaee"/><path d="M46 8 H50 V38 H46 Z" fill="#b9c6d2"/><path d="M53 0 H66 V40 H50 Z" fill="#39434c"/><path d="M66 0 H100 V42 H66 Z" fill="#4a555e"/><path d="M70 22 L94 4 L96 7 L72 26 Z" fill="#a9b3bc"/><path d="M70 22 H72.500 V38 H70 Z" fill="#a9b3bc"/><path d="M4 6 H12 M4 12 H12 M4 18 H12 M4 24 H12 M4 30 H12 M30 8 H38 M30 14 H38 M30 20 H38 M30 26 H38 M78 30 H98 M78 34 H98" stroke="#6c7882" stroke-width="1.600" opacity=".8"/><path d="M0 40 L44 37 H52 L100 41 V60 H0 Z" fill="#a4a9ae"/><path d="M0 50 L100 50 V60 H0 Z" fill="#8f959b" opacity=".6"/><path d="M30 38 H34 M44 37 H47 M54 37 H57 M60 38 H64" stroke="#e2b340" stroke-width="2"/><path d="M4 39 H26 M76 40 H98" stroke="#2b3238" stroke-width="3" opacity=".8"/></symbol>
<symbol id="ph-glass" viewBox="0 0 100 60" preserveAspectRatio="none"><rect width="100" height="60" fill="#5b63a9"/><path d="M50 0 H100 V22 L70 30 Z" fill="#dfe7f5"/><path d="M62 4 Q80 -2 100 10 V18 Q80 8 66 14 Z" fill="#fff"/><path d="M0 30 L40 8 L60 26 L14 60 H0 Z" fill="#34387c"/><path d="M20 60 L70 30 L100 44 V60 Z" fill="#3c3f78"/><path d="M64 38 L100 26 V60 H76 Z" fill="#2c2d4c"/><path d="M6 36 L44 14 M12 46 L54 22 M30 58 L74 34" stroke="#8d97d4" stroke-width="2.5" opacity=".8"/><path d="M0 0 H44 L0 24 Z" fill="#7f86c6"/></symbol>
<symbol id="ph-desk" viewBox="0 0 100 60" preserveAspectRatio="none"><rect width="100" height="60" fill="#e3e6eb"/><rect x="0" y="0" width="5" height="36" fill="#2a323c"/><path d="M44 0 H63 V24 H60 V4 H44 Z" fill="#1f262d"/><rect x="34" y="10" width="24" height="9" fill="#c3cad6"/><path d="M0 36 H40 V46 H0 Z" fill="#5c656f"/><path d="M0 44 L60 40 L100 50 V60 H0 Z" fill="#d9dde2"/><path d="M8 46 L30 44 L62 50 L36 56 Z" fill="#8d949c"/><rect x="32" y="20" width="39" height="26" rx="1.5" fill="#1d242b"/><rect x="35" y="23" width="33" height="19" fill="#2f3d45"/><path d="M37 26 H50 M37 29 H54 M37 32 H48 M37 35 H52 M56 27 H64 M56 31 H62" stroke="#7fa08a" stroke-width="1"/><path d="M30 46 H72 L76 52 H28 Z" fill="#3a434b"/><path d="M0 48 L22 60 H0 Z" fill="#3b302b"/><path d="M8 54 L24 60 H8 Z" fill="#b98e72"/><path d="M74 2 Q82 -2 92 4 Q84 10 74 6 Z" fill="#cfd5dc"/><path d="M90 20 L86 44 M84 44 H92" stroke="#b9c0c8" stroke-width="1.6"/><path d="M78 60 L100 50 V60 Z" fill="#5d6770"/><rect x="25" y="30" width="5" height="7" fill="#6f9a60"/></symbol>
<symbol id="ph-neon" viewBox="0 0 100 60" preserveAspectRatio="none"><rect width="100" height="60" fill="#0a2440"/><path d="M0 0 H27 L31 42 L0 46 Z" fill="#167fa3"/><path d="M72 0 H100 V46 L68 42 Z" fill="#1a8cb0"/><path d="M14 0 H22 V30 H14 Z" fill="#2ab4d4"/><path d="M78 2 H86 V34 H78 Z" fill="#30a8d0"/><rect x="45" y="13" width="11" height="30" fill="#149aa8"/><rect x="47" y="24" width="7" height="11" fill="#35e0dc"/><rect x="47" y="10" width="7" height="4" fill="#c8b050"/><rect x="40" y="17" width="5" height="4" fill="#e85a78"/><rect x="56" y="18" width="7" height="6" fill="#f0687e"/><rect x="57.500" y="19.500" width="4" height="2" fill="#fff"/><rect x="0" y="32" width="6" height="12" fill="#f0862e"/><rect x="86" y="6" width="14" height="14" fill="#efe6f0"/><path d="M4 6 H9 V10 H4 Z M9 16 H13 V21 H9 Z M24 8 H28 V14 H24 Z M70 10 H74 V16 H70 Z M74 22 H78 V28 H74 Z M90 26 H95 V32 H90 Z" fill="#e2556b"/><path d="M2 14 H6 V20 H2 Z M20 20 H25 V26 H20 Z M72 30 H76 V36 H72 Z M88 36 H93 V40 H88 Z M64 24 H68 V30 H64 Z" fill="#3a62d8"/><path d="M8 24 H12 V30 H8 Z M66 6 H70 V10 H66 Z M82 12 H85 V20 H82 Z" fill="#f0d060"/><ellipse cx="37" cy="37" rx="7" ry="4.500" fill="#2c3a22"/><ellipse cx="59" cy="38" rx="6" ry="4" fill="#2c3a22"/><path d="M0 44 L31 41 H68 L100 44 V60 H0 Z" fill="#14668c"/><rect x="0" y="52" width="100" height="8" fill="#1a83ac"/><path d="M28 48 H36 M44 49 H52 M56 48 H62" stroke="#f6b4b0" stroke-width="3.500" opacity=".85"/><path d="M8 46 H20 M70 46 H92" stroke="#0c2c44" stroke-width="3" opacity=".8"/></symbol>
<symbol id="ph-sweater" viewBox="0 0 100 60" preserveAspectRatio="none"><rect width="100" height="60" fill="url(#gsw)"/><path d="M0 0 H22 L14 30 H0 Z" fill="#d9c7a0"/><path d="M84 0 H100 V34 H90 Z" fill="#e6ddc9"/><path d="M30 0 H80 L88 34 L60 40 L24 34 Z" fill="#c4933a"/><path d="M52 26 Q66 20 84 30 L80 40 Q64 34 50 38 Z" fill="#e3c3a2"/><path d="M10 38 H96 V58 H4 Z" fill="#6a4a35"/><path d="M20 36 L70 34 L78 42 L16 44 Z" fill="#c9b9a6"/><path d="M0 52 H100 V60 H0 Z" fill="#4a3327"/></symbol>
<symbol id="ph-car" viewBox="0 0 100 60" preserveAspectRatio="none"><rect width="100" height="60" fill="#dde6ef"/><path d="M0 0 H100 V14 L60 22 L0 16 Z" fill="#b5c7d8"/><rect x="20" y="18" width="44" height="26" rx="3" fill="#2f4f6c"/><rect x="24" y="22" width="36" height="18" fill="#7fb2d8"/><path d="M0 44 H100 V60 H0 Z" fill="#c9d4e0"/><path d="M66 24 H92 V40 H66 Z" fill="#f2f5f9"/><circle cx="12" cy="34" r="6" fill="#9fb3c6"/></symbol>
</defs></svg>
<div class="abs" style="left:269px;top:200px;width:19px;height:774px;background:#f2f2f2"></div>
<div class="abs" style="left:269px;top:200px;width:19px;height:19px;background:#fff;border:1px solid #8c8c8c"></div>
<svg style="left:274px;top:206px" width="9" height="5" viewBox="0 0 9 5"><path d="M0 5 H9 L4.5 0 Z" fill="#222"/></svg>
<div class="abs" style="left:269px;top:384px;width:19px;height:484px;background:#fff;border:1px solid #8c8c8c"></div>
<div class="abs" style="left:292px;top:200px;width:1px;height:774px;background:#c0c0c0"></div>
<div class="t" style="left:16.500px;top:212.4px;font-size:18.5px;line-height:28px;height:28px;color:#444;font-weight:300;font-family:'Noto Sans CJK SC',sans-serif">3</div>
<div class="abs" style="left:46px;top:222px;width:198px;height:112px;background:#fff;border:1px solid #c0c0c0"></div>
<svg style="left:14px;top:241px" width="14" height="12" viewBox="0 0 14 12"><path d="M7.6 -0.200 L9.3 3.900 L13.400 4.100 L10.200 6.900 L11.400 11.200 L7.600 8.700 L3.800 11.200 L5 6.900 L1.800 4.100 L5.900 3.900 Z" fill="#666"/><path d="M0.800 1.900 L2.800 1.500 M0.800 7.600 L2.800 7.200" stroke="#666" stroke-width="1.100"/></svg>
<svg style="left:74px;top:285px;overflow:hidden;opacity:.38;filter:blur(.7px);-webkit-mask-image:linear-gradient(#000,transparent);mask-image:linear-gradient(#000,transparent)" width="17" height="6"><g transform="translate(0,24) scale(1,-1)"><use href="#ph-street" width="17" height="24"/></g></svg>
<svg style="left:74px;top:261px;overflow:hidden;border-radius:2px;filter:blur(.35px)" width="17" height="24"><use href="#ph-street" width="17" height="24"/></svg>
<svg style="left:200px;top:285px;overflow:hidden;opacity:.38;filter:blur(.7px);-webkit-mask-image:linear-gradient(#000,transparent);mask-image:linear-gradient(#000,transparent)" width="19" height="6"><g transform="translate(0,24) scale(1,-1)"><use href="#ph-sweater" width="19" height="24"/></g></svg>
<svg style="left:200px;top:261px;overflow:hidden;border-radius:2px;filter:blur(.35px)" width="19" height="24"><use href="#ph-sweater" width="19" height="24"/></svg>
<svg style="left:90px;top:288px;overflow:hidden;opacity:.38;filter:blur(.7px);-webkit-mask-image:linear-gradient(#000,transparent);mask-image:linear-gradient(#000,transparent)" width="25" height="6"><g transform="translate(0,29) scale(1,-1)"><use href="#ph-glass" width="25" height="29"/></g></svg>
<svg style="left:90px;top:259px;overflow:hidden;border-radius:3px;filter:blur(.35px)" width="25" height="29"><use href="#ph-glass" width="25" height="29"/></svg>
<svg style="left:176px;top:288px;overflow:hidden;opacity:.38;filter:blur(.7px);-webkit-mask-image:linear-gradient(#000,transparent);mask-image:linear-gradient(#000,transparent)" width="24" height="6"><g transform="translate(0,29) scale(1,-1)"><use href="#ph-neon" width="24" height="29"/></g></svg>
<svg style="left:176px;top:259px;overflow:hidden;border-radius:3px;filter:blur(.35px)" width="24" height="29"><use href="#ph-neon" width="24" height="29"/></svg>
<svg style="left:114px;top:292px;overflow:hidden;opacity:.38;filter:blur(.7px);-webkit-mask-image:linear-gradient(#000,transparent);mask-image:linear-gradient(#000,transparent)" width="62" height="8"><g transform="translate(0,37) scale(1,-1)"><use href="#ph-desk" width="62" height="37"/></g></svg>
<svg style="left:114px;top:255px;overflow:hidden;border-radius:4px;filter:blur(.35px)" width="62" height="37"><use href="#ph-desk" width="62" height="37"/></svg>
<div class="t" style="left:16.500px;top:349.4px;font-size:18.5px;line-height:28px;height:28px;color:#444;font-weight:300;font-family:'Noto Sans CJK SC',sans-serif">4</div>
<div class="abs" style="left:46px;top:359px;width:198px;height:112px;background:#fff;border:1px solid #c0c0c0"></div>
<svg style="left:14px;top:378px" width="14" height="12" viewBox="0 0 14 12"><path d="M7.6 -0.200 L9.3 3.900 L13.400 4.100 L10.200 6.900 L11.400 11.200 L7.600 8.700 L3.800 11.200 L5 6.900 L1.800 4.100 L5.900 3.900 Z" fill="#666"/><path d="M0.800 1.900 L2.800 1.500 M0.800 7.600 L2.800 7.200" stroke="#666" stroke-width="1.100"/></svg>
<svg style="left:74px;top:422px;overflow:hidden;opacity:.38;filter:blur(.7px);-webkit-mask-image:linear-gradient(#000,transparent);mask-image:linear-gradient(#000,transparent)" width="17" height="6"><g transform="translate(0,24) scale(1,-1)"><use href="#ph-glass" width="17" height="24"/></g></svg>
<svg style="left:74px;top:398px;overflow:hidden;border-radius:2px;filter:blur(.35px)" width="17" height="24"><use href="#ph-glass" width="17" height="24"/></svg>
<svg style="left:200px;top:422px;overflow:hidden;opacity:.38;filter:blur(.7px);-webkit-mask-image:linear-gradient(#000,transparent);mask-image:linear-gradient(#000,transparent)" width="19" height="6"><g transform="translate(0,24) scale(1,-1)"><use href="#ph-street" width="19" height="24"/></g></svg>
<svg style="left:200px;top:398px;overflow:hidden;border-radius:2px;filter:blur(.35px)" width="19" height="24"><use href="#ph-street" width="19" height="24"/></svg>
<svg style="left:90px;top:425px;overflow:hidden;opacity:.38;filter:blur(.7px);-webkit-mask-image:linear-gradient(#000,transparent);mask-image:linear-gradient(#000,transparent)" width="25" height="6"><g transform="translate(0,29) scale(1,-1)"><use href="#ph-desk" width="25" height="29"/></g></svg>
<svg style="left:90px;top:396px;overflow:hidden;border-radius:3px;filter:blur(.35px)" width="25" height="29"><use href="#ph-desk" width="25" height="29"/></svg>
<svg style="left:176px;top:425px;overflow:hidden;opacity:.38;filter:blur(.7px);-webkit-mask-image:linear-gradient(#000,transparent);mask-image:linear-gradient(#000,transparent)" width="24" height="6"><g transform="translate(0,29) scale(1,-1)"><use href="#ph-sweater" width="24" height="29"/></g></svg>
<svg style="left:176px;top:396px;overflow:hidden;border-radius:3px;filter:blur(.35px)" width="24" height="29"><use href="#ph-sweater" width="24" height="29"/></svg>
<svg style="left:114px;top:429px;overflow:hidden;opacity:.38;filter:blur(.7px);-webkit-mask-image:linear-gradient(#000,transparent);mask-image:linear-gradient(#000,transparent)" width="62" height="8"><g transform="translate(0,37) scale(1,-1)"><use href="#ph-neon" width="62" height="37"/></g></svg>
<svg style="left:114px;top:392px;overflow:hidden;border-radius:4px;filter:blur(.35px)" width="62" height="37"><use href="#ph-neon" width="62" height="37"/></svg>
<div class="t" style="left:16.500px;top:486.4px;font-size:18.5px;line-height:28px;height:28px;color:#444;font-weight:300;font-family:'Noto Sans CJK SC',sans-serif">5</div>
<div class="abs" style="left:46px;top:496px;width:198px;height:112px;background:#fff;border:1px solid #c0c0c0"></div>
<svg style="left:14px;top:515px" width="14" height="12" viewBox="0 0 14 12"><path d="M7.6 -0.200 L9.3 3.900 L13.400 4.100 L10.200 6.900 L11.400 11.200 L7.600 8.700 L3.800 11.200 L5 6.900 L1.800 4.100 L5.900 3.900 Z" fill="#666"/><path d="M0.800 1.900 L2.800 1.500 M0.800 7.600 L2.800 7.200" stroke="#666" stroke-width="1.100"/></svg>
<svg style="left:74px;top:559px;overflow:hidden;opacity:.38;filter:blur(.7px);-webkit-mask-image:linear-gradient(#000,transparent);mask-image:linear-gradient(#000,transparent)" width="17" height="6"><g transform="translate(0,24) scale(1,-1)"><use href="#ph-desk" width="17" height="24"/></g></svg>
<svg style="left:74px;top:535px;overflow:hidden;border-radius:2px;filter:blur(.35px)" width="17" height="24"><use href="#ph-desk" width="17" height="24"/></svg>
<svg style="left:200px;top:559px;overflow:hidden;opacity:.38;filter:blur(.7px);-webkit-mask-image:linear-gradient(#000,transparent);mask-image:linear-gradient(#000,transparent)" width="19" height="6"><g transform="translate(0,24) scale(1,-1)"><use href="#ph-glass" width="19" height="24"/></g></svg>
<svg style="left:200px;top:535px;overflow:hidden;border-radius:2px;filter:blur(.35px)" width="19" height="24"><use href="#ph-glass" width="19" height="24"/></svg>
<svg style="left:90px;top:562px;overflow:hidden;opacity:.38;filter:blur(.7px);-webkit-mask-image:linear-gradient(#000,transparent);mask-image:linear-gradient(#000,transparent)" width="25" height="6"><g transform="translate(0,29) scale(1,-1)"><use href="#ph-neon" width="25" height="29"/></g></svg>
<svg style="left:90px;top:533px;overflow:hidden;border-radius:3px;filter:blur(.35px)" width="25" height="29"><use href="#ph-neon" width="25" height="29"/></svg>
<svg style="left:176px;top:562px;overflow:hidden;opacity:.38;filter:blur(.7px);-webkit-mask-image:linear-gradient(#000,transparent);mask-image:linear-gradient(#000,transparent)" width="24" height="6"><g transform="translate(0,29) scale(1,-1)"><use href="#ph-street" width="24" height="29"/></g></svg>
<svg style="left:176px;top:533px;overflow:hidden;border-radius:3px;filter:blur(.35px)" width="24" height="29"><use href="#ph-street" width="24" height="29"/></svg>
<svg style="left:114px;top:566px;overflow:hidden;opacity:.38;filter:blur(.7px);-webkit-mask-image:linear-gradient(#000,transparent);mask-image:linear-gradient(#000,transparent)" width="62" height="8"><g transform="translate(0,37) scale(1,-1)"><use href="#ph-sweater" width="62" height="37"/></g></svg>
<svg style="left:114px;top:529px;overflow:hidden;border-radius:4px;filter:blur(.35px)" width="62" height="37"><use href="#ph-sweater" width="62" height="37"/></svg>
<div class="t" style="left:16.500px;top:623.4px;font-size:18.5px;line-height:28px;height:28px;color:#444;font-weight:300;font-family:'Noto Sans CJK SC',sans-serif">6</div>
<div class="abs" style="left:46px;top:633px;width:198px;height:112px;background:#fff;border:1px solid #c0c0c0"></div>
<svg style="left:14px;top:652px" width="14" height="12" viewBox="0 0 14 12"><path d="M7.6 -0.200 L9.3 3.900 L13.400 4.100 L10.200 6.900 L11.400 11.200 L7.600 8.700 L3.800 11.200 L5 6.900 L1.800 4.100 L5.900 3.900 Z" fill="#666"/><path d="M0.800 1.900 L2.800 1.500 M0.800 7.600 L2.800 7.200" stroke="#666" stroke-width="1.100"/></svg>
<svg style="left:74px;top:696px;overflow:hidden;opacity:.38;filter:blur(.7px);-webkit-mask-image:linear-gradient(#000,transparent);mask-image:linear-gradient(#000,transparent)" width="17" height="6"><g transform="translate(0,24) scale(1,-1)"><use href="#ph-neon" width="17" height="24"/></g></svg>
<svg style="left:74px;top:672px;overflow:hidden;border-radius:2px;filter:blur(.35px)" width="17" height="24"><use href="#ph-neon" width="17" height="24"/></svg>
<svg style="left:200px;top:696px;overflow:hidden;opacity:.38;filter:blur(.7px);-webkit-mask-image:linear-gradient(#000,transparent);mask-image:linear-gradient(#000,transparent)" width="19" height="6"><g transform="translate(0,24) scale(1,-1)"><use href="#ph-desk" width="19" height="24"/></g></svg>
<svg style="left:200px;top:672px;overflow:hidden;border-radius:2px;filter:blur(.35px)" width="19" height="24"><use href="#ph-desk" width="19" height="24"/></svg>
<svg style="left:90px;top:699px;overflow:hidden;opacity:.38;filter:blur(.7px);-webkit-mask-image:linear-gradient(#000,transparent);mask-image:linear-gradient(#000,transparent)" width="25" height="6"><g transform="translate(0,29) scale(1,-1)"><use href="#ph-sweater" width="25" height="29"/></g></svg>
<svg style="left:90px;top:670px;overflow:hidden;border-radius:3px;filter:blur(.35px)" width="25" height="29"><use href="#ph-sweater" width="25" height="29"/></svg>
<svg style="left:176px;top:699px;overflow:hidden;opacity:.38;filter:blur(.7px);-webkit-mask-image:linear-gradient(#000,transparent);mask-image:linear-gradient(#000,transparent)" width="24" height="6"><g transform="translate(0,29) scale(1,-1)"><use href="#ph-glass" width="24" height="29"/></g></svg>
<svg style="left:176px;top:670px;overflow:hidden;border-radius:3px;filter:blur(.35px)" width="24" height="29"><use href="#ph-glass" width="24" height="29"/></svg>
<svg style="left:114px;top:703px;overflow:hidden;opacity:.38;filter:blur(.7px);-webkit-mask-image:linear-gradient(#000,transparent);mask-image:linear-gradient(#000,transparent)" width="62" height="8"><g transform="translate(0,37) scale(1,-1)"><use href="#ph-street" width="62" height="37"/></g></svg>
<svg style="left:114px;top:666px;overflow:hidden;border-radius:4px;filter:blur(.35px)" width="62" height="37"><use href="#ph-street" width="62" height="37"/></svg>
<div class="t" style="left:16.500px;top:760.4px;font-size:18.5px;line-height:28px;height:28px;color:#b7472a;font-weight:300;font-family:'Noto Sans CJK SC',sans-serif">7</div>
<div class="abs" style="left:43px;top:767px;width:204px;height:118px;background:#b7472a"></div>
<div class="abs" style="left:46px;top:770px;width:198px;height:112px;background:#fff"></div>
<div class="t" style="left:16.500px;top:897.4px;font-size:18.5px;line-height:28px;height:28px;color:#444;font-weight:300;font-family:'Noto Sans CJK SC',sans-serif">8</div>
<div class="abs" style="left:46px;top:907px;width:198px;height:112px;background:#fff;border:1px solid #c0c0c0"></div>
<svg style="left:46px;top:770px" width="198" height="112" viewBox="450 211 1294 729"><path d="M682 303.5 H1513" stroke="#c2c2c2" stroke-width="4.5"/><path d="M682 384.5 H1513" stroke="#c2c2c2" stroke-width="4.5"/><path d="M682 465.5 H1513" stroke="#c2c2c2" stroke-width="4.5"/><path d="M682 547.5 H1513" stroke="#c2c2c2" stroke-width="4.5"/><path d="M682 628.5 H1513" stroke="#c2c2c2" stroke-width="4.5"/><path d="M682 709.5 H1513" stroke="#c2c2c2" stroke-width="4.5"/><path d="M682 791.5 H1513" stroke="#c2c2c2" stroke-width="4.5"/><use href="#chartg"/><path d="M793.5 791 V386 H836.5 V791 Z" fill="none" stroke="#1f3864" stroke-width="5.5"/><path d="M1001.5 791 V386 H1044.5 V791 Z" fill="none" stroke="#1f3864" stroke-width="5.5"/><path d="M1210 791 V386 H1253 V791 Z" fill="none" stroke="#1f3864" stroke-width="5.5"/><path d="M1418 791 V386 H1461 V791 Z" fill="none" stroke="#1f3864" stroke-width="5.5"/><path d="M765 812 H807" stroke="#b8b8b8" stroke-width="6" stroke-dasharray="14 5"/><path d="M973.5 812 H1015.5" stroke="#b8b8b8" stroke-width="6" stroke-dasharray="14 5"/><path d="M1181.8 812 H1223.8" stroke="#b8b8b8" stroke-width="6" stroke-dasharray="14 5"/><path d="M1390 812 H1432" stroke="#b8b8b8" stroke-width="6" stroke-dasharray="14 5"/><path d="M1488 304 H1503" stroke="#c4c4c4" stroke-width="5"/><path d="M1488 385 H1503" stroke="#c4c4c4" stroke-width="5"/><path d="M1488 466 H1503" stroke="#c4c4c4" stroke-width="5"/><path d="M1488 548 H1503" stroke="#c4c4c4" stroke-width="5"/><path d="M1488 629 H1503" stroke="#c4c4c4" stroke-width="5"/><path d="M1488 710 H1503" stroke="#c4c4c4" stroke-width="5"/><path d="M1488 792 H1503" stroke="#c4c4c4" stroke-width="5"/><path d="M1056 843 H1098 M1124 843 H1154" stroke="#bdbdbd" stroke-width="6" stroke-dasharray="12 5"/><rect x="1045" y="839" width="8" height="8" fill="#4472c4"/><rect x="1110" y="838" width="10" height="10" fill="#1f3864"/></svg>
</div>
<div id="main">
<div class="abs" style="left:450px;top:211px;width:1295px;height:730px;background:#fff;border:1px solid #c0c0c0"></div>
<div class="abs" style="left:295px;top:957px;width:1625px;height:1px;background:#c6c6c6"></div>
<div class="t" style="left:306.5px;top:966px;font-size:18.3px;line-height:24px;height:24px;color:#444">单击此处添加备注</div>
<div class="abs" style="left:1900px;top:200px;width:20px;height:689px;background:#f2f2f2"></div>
<div class="abs" style="left:1900px;top:200px;width:19px;height:19px;background:#fff;border:1px solid #8c8c8c"></div>
<svg style="left:1905px;top:206px" width="9" height="5" viewBox="0 0 9 5"><path d="M0 5 H9 L4.5 0 Z" fill="#222"/></svg>
<div class="abs" style="left:1900px;top:653px;width:19px;height:72px;background:#fff;border:1px solid #8c8c8c"></div>
<div class="abs" style="left:1900px;top:870px;width:19px;height:19px;background:#fff;border:1px solid #8c8c8c"></div>
<svg style="left:1905px;top:878px" width="9" height="5" viewBox="0 0 9 5"><path d="M0 0 H9 L4.5 5 Z" fill="#222"/></svg>
<svg style="left:1903px;top:893px" width="13" height="37" viewBox="0 0 13 37"><path d="M6.5 0 L13 7 H9.5 L13 11 V16 H0 V11 L3.500 7 H0 Z" fill="#666"/><path d="M6.5 37 L13 30 H9.5 L13 26 V21 H0 V26 L3.5 30 H0 Z" fill="#666"/></svg>
<svg style="left:0;top:0" width="1920" height="974" viewBox="0 0 1920 974">
<defs><g id="chartg">
<path d="M682 303.5 H1513" stroke="#d9d9d9" stroke-width="1.2" fill="none"/>
<path d="M682 384.5 H1513" stroke="#d9d9d9" stroke-width="1.2" fill="none"/>
<path d="M682 465.5 H1513" stroke="#d9d9d9" stroke-width="1.2" fill="none"/>
<path d="M682 547.5 H1513" stroke="#d9d9d9" stroke-width="1.2" fill="none"/>
<path d="M682 628.5 H1513" stroke="#d9d9d9" stroke-width="1.2" fill="none"/>
<path d="M682 709.5 H1513" stroke="#d9d9d9" stroke-width="1.2" fill="none"/>
<path d="M682 791.5 H1513" stroke="#d9d9d9" stroke-width="1.2" fill="none"/>
<rect x="791.6" y="384.4" width="46.1" height="406.6" fill="#ed7d31"/>
<path d="M791.6 791 V384.4 H837.7 V791" fill="none" stroke="#1f3864" stroke-width="1.1"/>
<rect x="999.9" y="384.4" width="46.1" height="406.6" fill="#ed7d31"/>
<path d="M999.9 791 V384.4 H1046.0 V791" fill="none" stroke="#1f3864" stroke-width="1.1"/>
<rect x="1208.2" y="384.4" width="46.1" height="406.6" fill="#ed7d31"/>
<path d="M1208.2 791 V384.4 H1254.3 V791" fill="none" stroke="#1f3864" stroke-width="1.1"/>
<rect x="1416.5" y="384.4" width="46.1" height="406.6" fill="#ed7d31"/>
<path d="M1416.5 791 V384.4 H1462.6 V791" fill="none" stroke="#1f3864" stroke-width="1.1"/>
<path d="M736 429 V781 H781 V429 a22.5 6 0 0 1 -45.0 0 Z" fill="rgba(68,114,196,0.2)"/>
<ellipse cx="758.5" cy="429" rx="22.5" ry="6" fill="rgba(68,114,196,0.115)"/>
<path d="M941.3 429 V791 H987.6 V429 a23.150000000000034 6 0 0 1 -46.30000000000007 0 Z" fill="rgba(68,114,196,0.2)"/>
<path d="M941.3 429 V791 M987.6 791 V429" fill="none" stroke="#b4bdd0" stroke-width="0.9"/>
<ellipse cx="964.45" cy="429" rx="23.150000000000034" ry="6" fill="rgba(68,114,196,0.115)" stroke="#b4bdd0" stroke-width="0.9"/>
<path d="M1150 429 V791 H1196.6 V429 a23.299999999999955 6 0 0 1 -46.59999999999991 0 Z" fill="rgba(68,114,196,0.2)"/>
<path d="M1150 429 V791 M1196.6 791 V429" fill="none" stroke="#b4bdd0" stroke-width="0.9"/>
<ellipse cx="1173.3" cy="429" rx="23.299999999999955" ry="6" fill="rgba(68,114,196,0.115)" stroke="#b4bdd0" stroke-width="0.9"/>
<path d="M1359 429 V791 H1405.7 V429 a23.350000000000023 6 0 0 1 -46.700000000000045 0 Z" fill="rgba(68,114,196,0.2)"/>
<path d="M1359 429 V791 M1405.7 791 V429" fill="none" stroke="#b4bdd0" stroke-width="0.9"/>
<ellipse cx="1382.35" cy="429" rx="23.350000000000023" ry="6" fill="rgba(68,114,196,0.115)" stroke="#b4bdd0" stroke-width="0.9"/>
<rect x="732" y="588" width="47" height="203" fill="#4472c4"/>
<ellipse cx="756.3" cy="602.6" rx="22.4" ry="5.6" fill="#8faadc"/>
<path d="M941 540 V789.5 a23.0 4 0 0 0 46.0 0 V540 Z" fill="#4472c4"/>
<ellipse cx="964.0" cy="540" rx="23.0" ry="4" fill="#8faadc"/>
<rect x="1149" y="700" width="46" height="91" fill="#4472c4"/>
<path d="M1149.5 781 a23.3 5.5 0 0 0 46.6 0" fill="none" stroke="#3f69b4" stroke-width="0.9"/>
<path d="M1149.5 506 V781 a23.350000000000023 5.5 0 0 0 46.700000000000045 0 V506 Z" fill="#4472c4"/>
<ellipse cx="1172.85" cy="506" rx="23.350000000000023" ry="5.5" fill="#8faadc"/>
<path d="M1358 462 V789.5 a24.0 3.5 0 0 0 48.0 0 V462 Z" fill="#4472c4"/>
<ellipse cx="1382.0" cy="462" rx="24.0" ry="3.5" fill="#8faadc"/>
<path d="M1358 462 V791 M1406 462 V791" stroke="#5a6270" stroke-width="1.3" fill="none"/>
</g></defs>
<use href="#chartg"/>
<text x="1476.15" y="309.1" textLength="25.349999999999998" lengthAdjust="spacingAndGlyphs" font-family="Liberation Sans, sans-serif" font-size="15.8" fill="#595959">120</text>
<text x="1476.15" y="390.1" textLength="25.349999999999998" lengthAdjust="spacingAndGlyphs" font-family="Liberation Sans, sans-serif" font-size="15.8" fill="#595959">100</text>
<text x="1484.6" y="471.1" textLength="16.9" lengthAdjust="spacingAndGlyphs" font-family="Liberation Sans, sans-serif" font-size="15.8" fill="#595959">80</text>
<text x="1484.6" y="553.1" textLength="16.9" lengthAdjust="spacingAndGlyphs" font-family="Liberation Sans, sans-serif" font-size="15.8" fill="#595959">60</text>
<text x="1484.6" y="634.1" textLength="16.9" lengthAdjust="spacingAndGlyphs" font-family="Liberation Sans, sans-serif" font-size="15.8" fill="#595959">40</text>
<text x="1484.6" y="715.1" textLength="16.9" lengthAdjust="spacingAndGlyphs" font-family="Liberation Sans, sans-serif" font-size="15.8" fill="#595959">20</text>
<text x="1493.05" y="797.1" textLength="8.45" lengthAdjust="spacingAndGlyphs" font-family="Liberation Sans, sans-serif" font-size="15.8" fill="#595959">0</text>
<text x="785" y="817.5" text-anchor="middle" font-family="Liberation Sans, Noto Sans CJK SC, sans-serif" font-size="15.6" fill="#595959">类别 1</text>
<text x="993.5" y="817.5" text-anchor="middle" font-family="Liberation Sans, Noto Sans CJK SC, sans-serif" font-size="15.6" fill="#595959">类别 2</text>
<text x="1201.8" y="817.5" text-anchor="middle" font-family="Liberation Sans, Noto Sans CJK SC, sans-serif" font-size="15.6" fill="#595959">类别 3</text>
<text x="1410" y="817.5" text-anchor="middle" font-family="Liberation Sans, Noto Sans CJK SC, sans-serif" font-size="15.6" fill="#595959">类别 4</text>
<rect x="1045.1" y="839.2" width="7.800" height="7" fill="#4472c4"/>
<text x="1056.5" y="848.7" font-family="Liberation Sans, Noto Sans CJK SC, sans-serif" font-size="15.6" fill="#595959">系列 1</text>
<rect x="1112.500" y="838.500" width="8" height="8" fill="#ed7d31" stroke="#1f3864" stroke-width="1"/>
<text x="1123.5" y="848.7" font-family="Liberation Sans, Noto Sans CJK SC, sans-serif" font-size="15.6" fill="#595959">辅助</text>
<g fill="none" stroke="#595959" stroke-width="1">
<path d="M1359 455.5 H1406.5 M1359 793.5 H1406.5 M1382.5 424.5 V450"/>
</g>
<g transform="translate(1382.3,412)">
<path d="M8.6 0.6 A8.7 8.7 0 1 0 3.2 8.1" fill="none" stroke="#595959" stroke-width="8"/>
<path d="M0.6 -1.6 H20.4 L10.4 9.2 Z" fill="#595959"/>
<path d="M8.6 0.6 A8.7 8.7 0 1 0 3.2 8.1" fill="none" stroke="#fff" stroke-width="4"/>
<path d="M4.8 0.3 H16.2 L10.4 6.4 Z" fill="#fff"/>
</g>
<circle cx="1359" cy="455.7" r="5.9" fill="#fff" stroke="#595959" stroke-width="1.9"/>
<circle cx="1382.6" cy="455.7" r="5.9" fill="#fff" stroke="#595959" stroke-width="1.9"/>
<circle cx="1406.5" cy="455.7" r="5.9" fill="#fff" stroke="#595959" stroke-width="1.9"/>
<circle cx="1359" cy="624.7" r="5.9" fill="#fff" stroke="#595959" stroke-width="1.9"/>
<circle cx="1406.5" cy="624.7" r="5.9" fill="#fff" stroke="#595959" stroke-width="1.9"/>
<circle cx="1359" cy="794" r="5.9" fill="#fff" stroke="#595959" stroke-width="1.9"/>
<circle cx="1382.6" cy="794" r="5.9" fill="#fff" stroke="#595959" stroke-width="1.9"/>
<circle cx="1406.5" cy="794" r="5.9" fill="#fff" stroke="#595959" stroke-width="1.9"/>
<circle cx="1382.4" cy="466.5" r="5.8" fill="#ffe600" stroke="#595959" stroke-width="1.9"/>
</svg>
</div>
</div>
</body>
</html>
